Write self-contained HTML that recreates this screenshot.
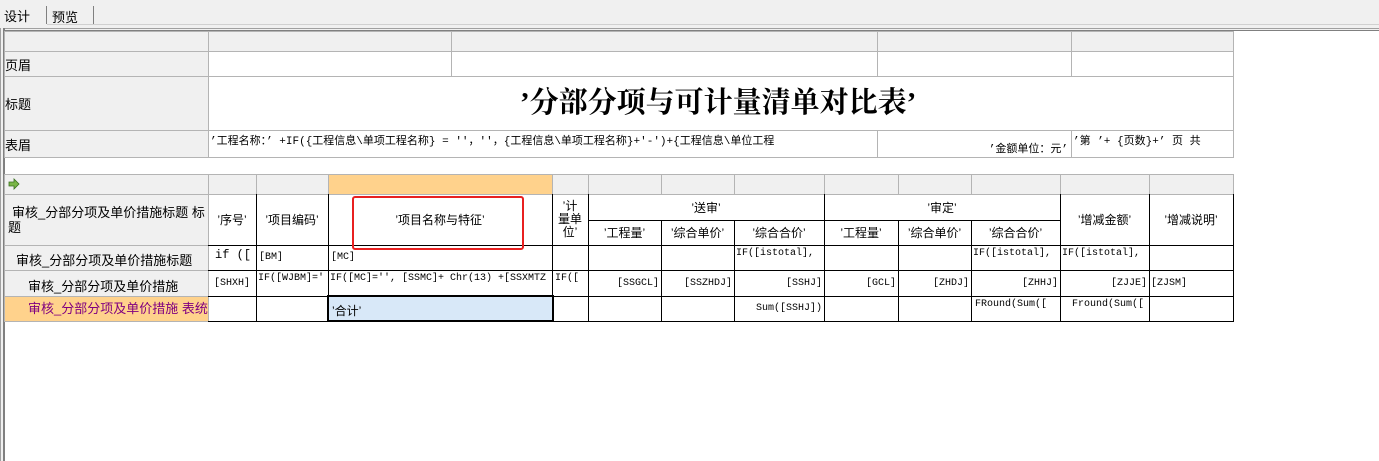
<!DOCTYPE html>
<html><head><meta charset="utf-8"><style>
body{margin:0;width:1379px;height:461px;background:#fff;position:relative;overflow:hidden;font-family:"Liberation Sans","Noto Sans CJK SC",sans-serif;font-size:12px;color:#000}
.a{position:absolute;box-sizing:border-box;white-space:nowrap;overflow:hidden}
.g{border-right:1px solid #b4b4b4;border-bottom:1px solid #b4b4b4}
.k{border-right:1px solid #000;border-bottom:1px solid #000}
.gb{background:#f0f0f0;border:1px solid #b4b4b4}
.m{font-family:"Liberation Mono","Noto Sans CJK SC",monospace;font-size:10px}
.ctr{display:flex;align-items:center;justify-content:center;text-align:center}
.vc{display:flex;align-items:center}
</style></head><body>
<!-- tab bar -->
<div class="a" style="left:0;top:0;width:1379px;height:25px;background:#f0f0f0;border-bottom:1px solid #d0d0d0"></div>
<div class="a" style="left:0;top:3px;width:47px;height:23px;background:#f0f0f0;padding:3px 0 0 4px;font-size:13px">设计</div>
<div class="a" style="left:46px;top:6px;width:48px;height:18px;border-left:1px solid #808080;border-right:1px solid #808080;padding:1px 0 0 5px;font-size:13px">预览</div>
<div class="a" style="left:0;top:25px;width:1379px;height:5px;background:#f0f0f0"></div>
<div class="a" style="left:0;top:28px;width:1379px;height:3px;border-top:1px solid #a0a0a0;border-bottom:1px solid #808080"></div>
<div class="a" style="left:0;top:28px;width:5px;height:433px;border-left:1px solid #a0a0a0;border-right:2px solid #808080;background:#f0f0f0"></div>

<!-- top section -->
<div class="a gb" style="left:4px;top:31px;width:205px;height:21px"></div>
<div class="a gb" style="left:208px;top:31px;width:244px;height:21px"></div>
<div class="a gb" style="left:451px;top:31px;width:427px;height:21px"></div>
<div class="a gb" style="left:877px;top:31px;width:195px;height:21px"></div>
<div class="a gb" style="left:1071px;top:31px;width:163px;height:21px"></div>

<div class="a g" style="left:208px;top:51px;width:244px;height:26px"></div>
<div class="a g" style="left:451px;top:51px;width:427px;height:26px"></div>
<div class="a g" style="left:877px;top:51px;width:195px;height:26px"></div>
<div class="a g" style="left:1071px;top:51px;width:163px;height:26px"></div>
<div class="a gb vc" style="left:4px;top:51px;width:205px;height:26px;font-size:13px">页眉</div>

<div class="a g" style="left:208px;top:76px;width:1026px;height:55px"></div>
<div class="a gb vc" style="left:4px;top:76px;width:205px;height:55px;font-size:13px">标题</div>
<div class="a" style="left:520px;top:83px;font-family:'Liberation Serif','Noto Serif CJK SC',serif;font-weight:bold;font-size:29px;line-height:40px">’分部分项与可计量清单对比表’</div>

<div class="a g m" style="left:208px;top:130px;width:670px;height:28px;padding:2px 0 0 2px;font-size:11px">’工程名称：’ +IF({工程信息\单项工程名称} = ''，''，{工程信息\单项工程名称}+'-')+{工程信息\单位工程</div>
<div class="a g m" style="left:877px;top:130px;width:195px;height:28px;padding:10px 3px 0 0;text-align:right;font-size:11px">’金额单位：元’</div>
<div class="a g m" style="left:1071px;top:130px;width:163px;height:28px;padding:2px 0 0 2px;font-size:11px">’第 ’+ {页数}+’ 页 共</div>
<div class="a gb vc" style="left:4px;top:130px;width:205px;height:28px;font-size:13px">表眉</div>

<!-- lower section -->
<div class="a gb" style="left:4px;top:174px;width:205px;height:21px;padding:3px 0 0 3px"><svg width="12" height="12" viewBox="0 0 12 12"><path d="M1 4h5V1l5 5-5 5V8H1z" fill="#7ab648" stroke="#3a7020" stroke-width="0.8"/></svg></div>
<div class="a gb" style="left:208px;top:174px;width:49px;height:21px"></div>
<div class="a gb" style="left:256px;top:174px;width:73px;height:21px"></div>
<div class="a gb" style="left:328px;top:174px;width:225px;height:21px;background:#ffd28c"></div>
<div class="a gb" style="left:552px;top:174px;width:37px;height:21px"></div>
<div class="a gb" style="left:588px;top:174px;width:74px;height:21px"></div>
<div class="a gb" style="left:661px;top:174px;width:74px;height:21px"></div>
<div class="a gb" style="left:734px;top:174px;width:91px;height:21px"></div>
<div class="a gb" style="left:824px;top:174px;width:75px;height:21px"></div>
<div class="a gb" style="left:898px;top:174px;width:74px;height:21px"></div>
<div class="a gb" style="left:971px;top:174px;width:90px;height:21px"></div>
<div class="a gb" style="left:1060px;top:174px;width:90px;height:21px"></div>
<div class="a gb" style="left:1149px;top:174px;width:85px;height:21px"></div>

<!-- header row labels -->
<div class="a gb" style="left:4px;top:194px;width:205px;height:52px;padding:10px 0 0 7px;font-size:13px;line-height:15px;white-space:normal">审核_分部分项及单价措施标题 标<br><span style="margin-left:-4px">题</span></div>
<div class="a gb" style="left:4px;top:245px;width:205px;height:26px;padding:4px 0 0 11px;font-size:13px">审核_分部分项及单价措施标题</div>
<div class="a gb" style="left:4px;top:270px;width:205px;height:27px;padding:5px 0 0 23px;font-size:13px">审核_分部分项及单价措施</div>
<div class="a gb" style="left:4px;top:296px;width:205px;height:26px;padding:1px 0 0 23px;font-size:13px;background:#ffd28c;color:#800080">审核_分部分项及单价措施 表统</div>

<!-- header cells -->
<div class="a k ctr" style="left:208px;top:194px;width:49px;height:52px">’序号’</div>
<div class="a k ctr" style="left:256px;top:194px;width:73px;height:52px">’项目编码’</div>
<div class="a k ctr" style="left:328px;top:194px;width:225px;height:52px">’项目名称与特征’</div>
<div class="a k ctr" style="left:552px;top:194px;width:37px;height:52px;white-space:normal;line-height:13px">’计<br>量单<br>位’</div>
<div class="a k ctr" style="left:588px;top:194px;width:237px;height:27px">’送审’</div>
<div class="a k ctr" style="left:824px;top:194px;width:237px;height:27px">’审定’</div>
<div class="a k ctr" style="left:1060px;top:194px;width:90px;height:52px">’增减金额’</div>
<div class="a k ctr" style="left:1149px;top:194px;width:85px;height:52px">’增减说明’</div>
<div class="a k ctr" style="left:588px;top:220px;width:74px;height:26px">’工程量’</div>
<div class="a k ctr" style="left:661px;top:220px;width:74px;height:26px">’综合单价’</div>
<div class="a k ctr" style="left:734px;top:220px;width:91px;height:26px">’综合合价’</div>
<div class="a k ctr" style="left:824px;top:220px;width:75px;height:26px">’工程量’</div>
<div class="a k ctr" style="left:898px;top:220px;width:74px;height:26px">’综合单价’</div>
<div class="a k ctr" style="left:971px;top:220px;width:90px;height:26px">’综合合价’</div>
<div class="a" style="left:352px;top:196px;width:172px;height:54px;border:2px solid #e82020;border-radius:3px"></div>

<!-- row 1 -->
<div class="a k m" style="left:208px;top:245px;width:49px;height:26px;padding:3px 0 0 7px;font-size:12px">if ([</div>
<div class="a k m" style="left:256px;top:245px;width:73px;height:26px;padding:7px 0 0 3px">[BM]</div>
<div class="a k m" style="left:328px;top:245px;width:225px;height:26px;padding:7px 0 0 3px">[MC]</div>
<div class="a k" style="left:552px;top:245px;width:37px;height:26px"></div>
<div class="a k" style="left:588px;top:245px;width:74px;height:26px"></div>
<div class="a k" style="left:661px;top:245px;width:74px;height:26px"></div>
<div class="a k m" style="left:734px;top:245px;width:91px;height:26px;padding:3px 0 0 2px">IF([istotal],</div>
<div class="a k" style="left:824px;top:245px;width:75px;height:26px"></div>
<div class="a k" style="left:898px;top:245px;width:74px;height:26px"></div>
<div class="a k m" style="left:971px;top:245px;width:90px;height:26px;padding:3px 0 0 2px">IF([istotal],</div>
<div class="a k m" style="left:1060px;top:245px;width:90px;height:26px;padding:3px 0 0 2px">IF([istotal],</div>
<div class="a k" style="left:1149px;top:245px;width:85px;height:26px"></div>

<!-- row 2 -->
<div class="a k m" style="left:208px;top:270px;width:49px;height:27px;padding:8px 0 0 6px">[SHXH]</div>
<div class="a k m" style="left:256px;top:270px;width:73px;height:27px;padding:3px 0 0 2px">IF([WJBM]='</div>
<div class="a k m" style="left:328px;top:270px;width:225px;height:27px;padding:3px 0 0 2px">IF([MC]='', [SSMC]+ Chr(13) +[SSXMTZ</div>
<div class="a k m" style="left:552px;top:270px;width:37px;height:27px;padding:3px 0 0 3px">IF([</div>
<div class="a k m" style="left:588px;top:270px;width:74px;height:27px;padding:8px 2px 0 0;text-align:right">[SSGCL]</div>
<div class="a k m" style="left:661px;top:270px;width:74px;height:27px;padding:8px 2px 0 0;text-align:right">[SSZHDJ]</div>
<div class="a k m" style="left:734px;top:270px;width:91px;height:27px;padding:8px 2px 0 0;text-align:right">[SSHJ]</div>
<div class="a k m" style="left:824px;top:270px;width:75px;height:27px;padding:8px 2px 0 0;text-align:right">[GCL]</div>
<div class="a k m" style="left:898px;top:270px;width:74px;height:27px;padding:8px 2px 0 0;text-align:right">[ZHDJ]</div>
<div class="a k m" style="left:971px;top:270px;width:90px;height:27px;padding:8px 2px 0 0;text-align:right">[ZHHJ]</div>
<div class="a k m" style="left:1060px;top:270px;width:90px;height:27px;padding:8px 2px 0 0;text-align:right">[ZJJE]</div>
<div class="a k m" style="left:1149px;top:270px;width:85px;height:27px;padding:8px 0 0 2px">[ZJSM]</div>

<!-- row 3 -->
<div class="a k" style="left:208px;top:296px;width:49px;height:26px"></div>
<div class="a k" style="left:256px;top:296px;width:73px;height:26px"></div>
<div class="a" style="left:327px;top:295px;width:227px;height:27px;border:2px solid #000;background:#d8e8f8;padding:5px 0 0 3px">’合计’</div>
<div class="a k" style="left:552px;top:296px;width:37px;height:26px"></div>
<div class="a k" style="left:588px;top:296px;width:74px;height:26px"></div>
<div class="a k" style="left:661px;top:296px;width:74px;height:26px"></div>
<div class="a k m" style="left:734px;top:296px;width:91px;height:26px;padding:7px 2px 0 0;text-align:right">Sum([SSHJ])</div>
<div class="a k" style="left:824px;top:296px;width:75px;height:26px"></div>
<div class="a k" style="left:898px;top:296px;width:74px;height:26px"></div>
<div class="a k m" style="left:971px;top:296px;width:90px;height:26px;padding:3px 0 0 4px">FRound(Sum([</div>
<div class="a k m" style="left:1060px;top:296px;width:90px;height:26px;padding:3px 0 0 12px">Fround(Sum([</div>
<div class="a k" style="left:1149px;top:296px;width:85px;height:26px"></div>
</body></html>
